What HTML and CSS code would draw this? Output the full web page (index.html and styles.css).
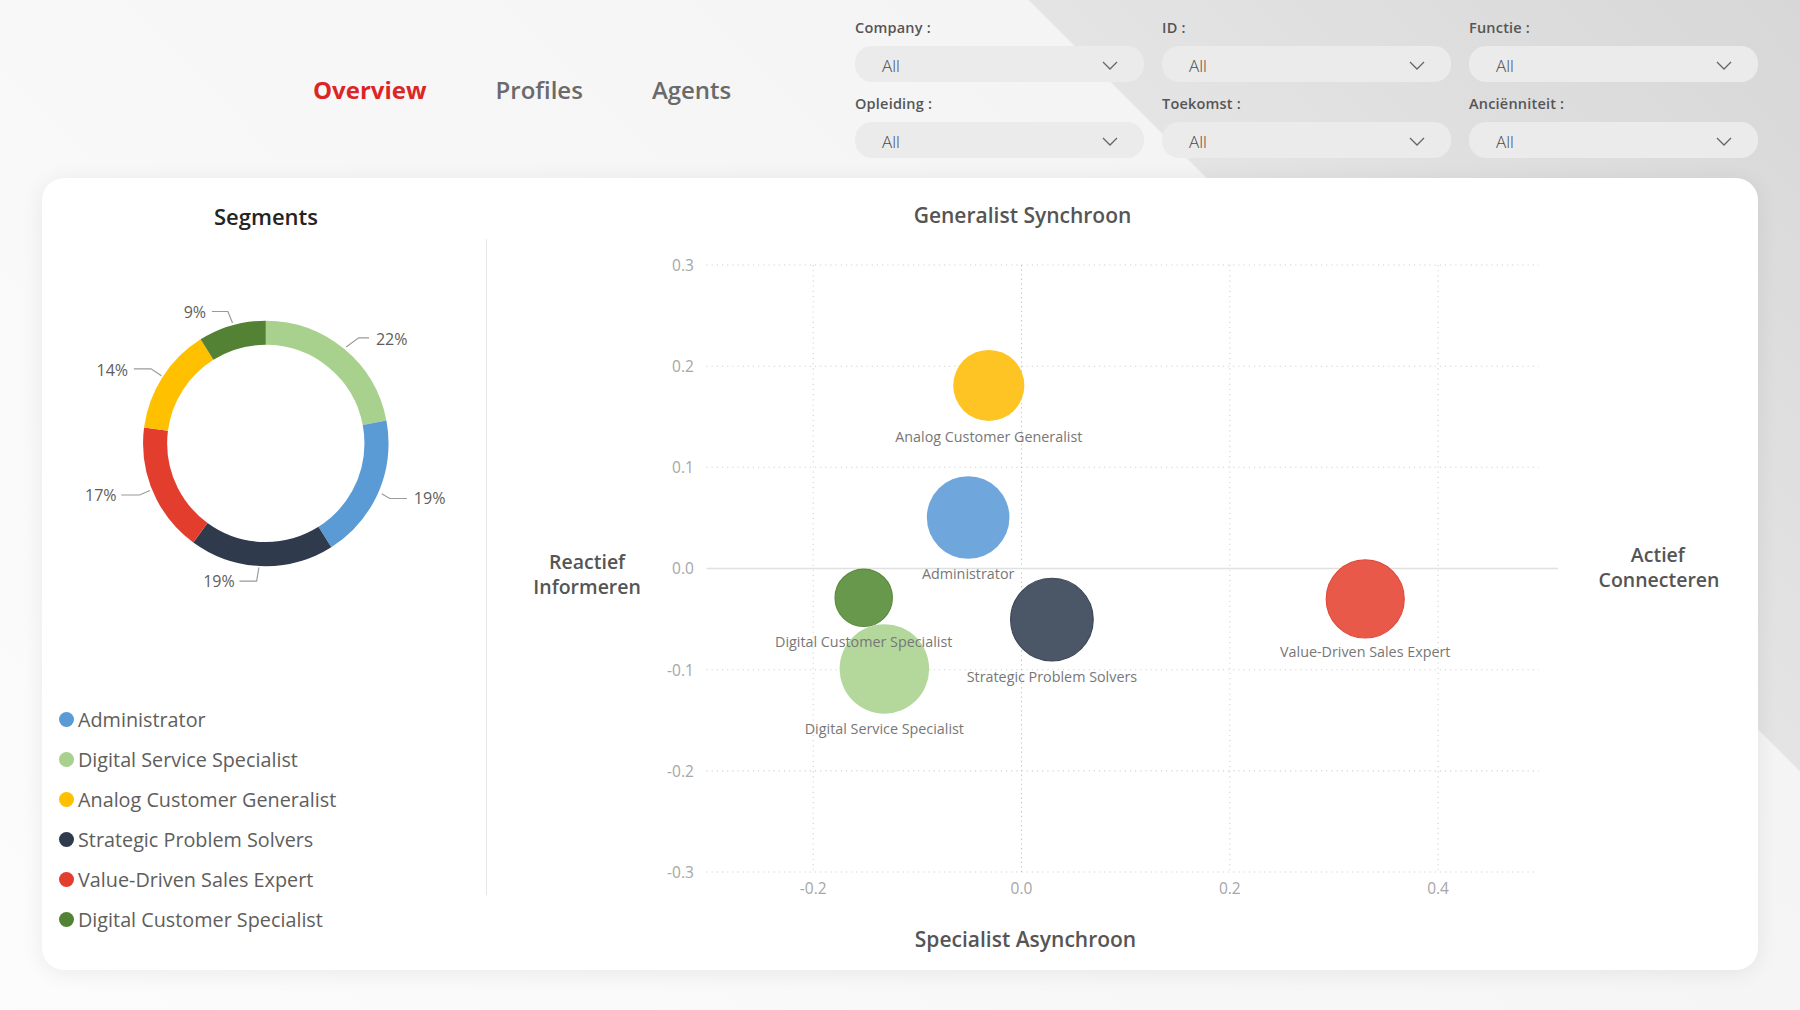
FILE: index.html
```html
<!DOCTYPE html>
<html lang="nl">
<head>
<meta charset="utf-8">
<title>Overview</title>
<link rel="stylesheet" href="styles.css">
</head>
<body>
<header class="topbar">
  <nav class="tabs">
    <a class="tab active">Overview</a>
    <a class="tab">Profiles</a>
    <a class="tab">Agents</a>
  </nav>
  <div class="filters">
    <div class="filter"><div class="flabel">Company :</div><div class="select"><span>All</span><svg class="chev" viewBox="0 0 16 9"><polyline points="1,1 8,8 15,1"/></svg></div></div>
    <div class="filter"><div class="flabel">ID :</div><div class="select"><span>All</span><svg class="chev" viewBox="0 0 16 9"><polyline points="1,1 8,8 15,1"/></svg></div></div>
    <div class="filter"><div class="flabel">Functie :</div><div class="select"><span>All</span><svg class="chev" viewBox="0 0 16 9"><polyline points="1,1 8,8 15,1"/></svg></div></div>
    <div class="filter"><div class="flabel">Opleiding :</div><div class="select"><span>All</span><svg class="chev" viewBox="0 0 16 9"><polyline points="1,1 8,8 15,1"/></svg></div></div>
    <div class="filter"><div class="flabel">Toekomst :</div><div class="select"><span>All</span><svg class="chev" viewBox="0 0 16 9"><polyline points="1,1 8,8 15,1"/></svg></div></div>
    <div class="filter"><div class="flabel">Anciënniteit :</div><div class="select"><span>All</span><svg class="chev" viewBox="0 0 16 9"><polyline points="1,1 8,8 15,1"/></svg></div></div>
  </div>
</header>

<main class="card">
  <section class="segments">
    <h2 class="seg-title">Segments</h2>
    <svg class="donut" viewBox="37 234 386 292" width="443" height="335">
      <g transform="rotate(-90 232 386)" fill="none" stroke-width="21">
        <circle cx="232" cy="386" r="96.5" stroke="#a9d18e" stroke-dasharray="133.39 606.32" stroke-dashoffset="0"/>
        <circle cx="232" cy="386" r="96.5" stroke="#5b9bd5" stroke-dasharray="115.2 606.32" stroke-dashoffset="-133.39"/>
        <circle cx="232" cy="386" r="96.5" stroke="#2f3b4d" stroke-dasharray="115.2 606.32" stroke-dashoffset="-248.59"/>
        <circle cx="232" cy="386" r="96.5" stroke="#e33d2d" stroke-dasharray="103.07 606.32" stroke-dashoffset="-363.79"/>
        <circle cx="232" cy="386" r="96.5" stroke="#ffc000" stroke-dasharray="84.88 606.32" stroke-dashoffset="-466.86"/>
        <circle cx="232" cy="386" r="96.5" stroke="#548235" stroke-dasharray="54.58 606.32" stroke-dashoffset="-551.74"/>
      </g>
      <g class="leaders">
        <polyline points="302,302 313,294 322,294"/>
        <polyline points="333,430 340,434 355,434"/>
        <polyline points="226,494 224,506 209,506"/>
        <polyline points="131,427 122,431 106,431"/>
        <polyline points="141,327 132,321 117,321"/>
        <polyline points="203,281 199,271 185,271"/>
      </g>
      <g class="pct">
        <text x="328" y="300">22%</text>
        <text x="361" y="439">19%</text>
        <text x="205" y="511" text-anchor="end">19%</text>
        <text x="102" y="436" text-anchor="end">17%</text>
        <text x="112" y="327" text-anchor="end">14%</text>
        <text x="180" y="277" text-anchor="end">9%</text>
      </g>
    </svg>
    <ul class="legend">
      <li><span class="dot c-admin"></span>Administrator</li>
      <li><span class="dot c-dss"></span>Digital Service Specialist</li>
      <li><span class="dot c-acg"></span>Analog Customer Generalist</li>
      <li><span class="dot c-sps"></span>Strategic Problem Solvers</li>
      <li><span class="dot c-vdse"></span>Value-Driven Sales Expert</li>
      <li><span class="dot c-dcs"></span>Digital Customer Specialist</li>
    </ul>
  </section>

  <div class="divider"></div>

  <section class="scatter">
    <h2 class="chart-title">Generalist Synchroon</h2>
    <svg class="plot" viewBox="424 204 1107 596" width="1271" height="684">
      <g class="grid">
        <line x1="615" y1="231" x2="1340" y2="231"/>
        <line x1="615" y1="319.2" x2="1340" y2="319.2"/>
        <line x1="615" y1="407.3" x2="1340" y2="407.3"/>
        <line x1="615" y1="583.7" x2="1340" y2="583.7"/>
        <line x1="615" y1="671.8" x2="1340" y2="671.8"/>
        <line x1="615" y1="760" x2="1340" y2="760"/>
        <line x1="708" y1="231" x2="708" y2="760"/>
        <line x1="1071" y1="231" x2="1071" y2="760"/>
        <line x1="1252.5" y1="231" x2="1252.5" y2="760"/>
      </g>
      <line class="zero-v" x1="889.5" y1="231" x2="889.5" y2="760"/>
      <line class="zero-h" x1="615" y1="495.5" x2="1357" y2="495.5"/>
      <g class="ticks">
        <text x="604" y="236" text-anchor="end">0.3</text>
        <text x="604" y="324" text-anchor="end">0.2</text>
        <text x="604" y="412" text-anchor="end">0.1</text>
        <text x="604" y="500" text-anchor="end">0.0</text>
        <text x="604" y="589" text-anchor="end">-0.1</text>
        <text x="604" y="677" text-anchor="end">-0.2</text>
        <text x="604" y="765" text-anchor="end">-0.3</text>
        <text x="708" y="779" text-anchor="middle">-0.2</text>
        <text x="889.5" y="779" text-anchor="middle">0.0</text>
        <text x="1071" y="779" text-anchor="middle">0.2</text>
        <text x="1252.5" y="779" text-anchor="middle">0.4</text>
      </g>
      <g class="bubbles">
        <circle cx="861" cy="336" r="31" fill="#fdc424"/>
        <circle cx="843" cy="451" r="36" fill="#6fa7dc"/>
        <circle cx="752" cy="521" r="25" fill="#68984b" stroke="#5b8a40"/>
        <circle cx="770" cy="583" r="39" fill="#b4d79c"/>
        <circle cx="916" cy="540" r="36" fill="#4b5667" stroke="#3b4656"/>
        <circle cx="1189" cy="522" r="34" fill="#e8594a" stroke="#e04a3b"/>
      </g>
      <g class="blabels">
        <text x="861" y="385">Analog Customer Generalist</text>
        <text x="843" y="505">Administrator</text>
        <text x="752" y="564">Digital Customer Specialist</text>
        <text x="770" y="640">Digital Service Specialist</text>
        <text x="916" y="594">Strategic Problem Solvers</text>
        <text x="1189" y="573">Value-Driven Sales Expert</text>
      </g>
      <g class="axis-side">
        <text x="511" y="496">Reactief</text>
        <text x="511" y="518">Informeren</text>
        <text x="1444" y="490">Actief</text>
        <text x="1445" y="512">Connecteren</text>
      </g>
    </svg>
    <div class="x-title">Specialist Asynchroon</div>
  </section>
</main>
</body>
</html>
```

FILE: styles.css
```css
html, body {
  margin: 0;
  height: 100%;
}

body {
  width: 1800px;
  height: 1010px;
  overflow: hidden;
  font-family: "Open Sans", "Noto Sans", Arial, sans-serif;
  background: linear-gradient(45deg, #fcfcfc 0%, #f4f4f4 72.5%, #e4e4e4 72.6%, #d7d7d7 100%);
}

/* ---------- header ---------- */
.topbar {
  box-sizing: border-box;
  height: 178px;
  display: flex;
  align-items: flex-start;
  padding: 20px 42px 0 313px;
}

.tabs {
  display: flex;
  gap: 69px;
  margin-top: 55px;
}

.tab {
  font-size: 24px;
  line-height: 30px;
  font-weight: 600;
  color: #6a6a6a;
  text-decoration: none;
}

.tab.active {
  color: #dc2626;
  font-weight: 700;
}

.filters {
  margin-left: auto;
  display: grid;
  grid-template-columns: repeat(3, 289px);
  column-gap: 18px;
  row-gap: 14px;
}

.flabel {
  font-size: 14.5px;
  line-height: 16px;
  font-weight: 600;
  color: #555;
  margin-bottom: 10px;
  letter-spacing: 0.2px;
}

.select {
  box-sizing: border-box;
  height: 36px;
  border-radius: 17px;
  background: #ebebeb;
  display: flex;
  align-items: center;
  justify-content: space-between;
  padding: 2px 26px 0 27px;
  font-size: 17px;
  font-weight: 300;
  color: #4a4a4a;
}

.chev {
  width: 16px;
  height: 9px;
  fill: none;
  stroke: #666;
  stroke-width: 1.3;
}

/* ---------- card ---------- */
.card {
  box-sizing: border-box;
  margin: 0 42px;
  height: 792px;
  background: #fff;
  border-radius: 22px;
  box-shadow: 0 3px 22px rgba(0, 0, 0, 0.07);
  display: flex;
}

.segments {
  width: 444px;
  flex: none;
  display: flex;
  flex-direction: column;
}

.seg-title {
  margin: 0;
  padding-top: 19px;
  padding-left: 4px;
  line-height: 38px;
  font-size: 22px;
  font-weight: 600;
  color: #252423;
  text-align: center;
}

.donut {
  display: block;
  margin-top: 34px;
}

.leaders polyline {
  fill: none;
  stroke: #9a9a9a;
  stroke-width: 1;
}

.pct text {
  font-size: 14px;
  fill: #605e5c;
}

.legend {
  list-style: none;
  margin: 95px 0 0 0;
  padding: 0 0 0 17px;
}

.legend li {
  height: 40px;
  display: flex;
  align-items: center;
  font-size: 19.8px;
  color: #605e5c;
}

.dot {
  width: 15px;
  height: 15px;
  border-radius: 50%;
  margin-right: 4px;
  flex: none;
}

.c-admin { background: #5b9bd5; }
.c-dss { background: #a9d18e; }
.c-acg { background: #ffc000; }
.c-sps { background: #2f3b4d; }
.c-vdse { background: #e33d2d; }
.c-dcs { background: #548235; }

.divider {
  width: 1px;
  flex: none;
  background: #e6e6e6;
  margin: 61px 0 75px 0;
}

.scatter {
  flex: 1;
  display: flex;
  flex-direction: column;
}

.chart-title {
  margin: 0;
  padding: 18px 200px 0 0;
  line-height: 38px;
  font-size: 21px;
  font-weight: 600;
  color: #555;
  text-align: center;
}

.plot {
  display: block;
}

.grid line {
  stroke: #cfcfcf;
  stroke-width: 0.9;
  stroke-dasharray: 1 3.5;
}

.zero-v {
  stroke: #bdbdbd;
  stroke-width: 0.9;
  stroke-dasharray: 1 3;
}

.zero-h {
  stroke: #e0e0e0;
  stroke-width: 1.2;
}

.ticks text {
  font-size: 13.5px;
  fill: #a6a6a6;
}

.blabels text {
  font-size: 12.5px;
  fill: #777;
  text-anchor: middle;
}

.axis-side text {
  font-size: 17px;
  font-weight: 600;
  fill: #555;
  text-anchor: middle;
}

.x-title {
  padding: 6px 194px 0 0;
  line-height: 30px;
  font-size: 21px;
  font-weight: 600;
  color: #555;
  text-align: center;
}
```
